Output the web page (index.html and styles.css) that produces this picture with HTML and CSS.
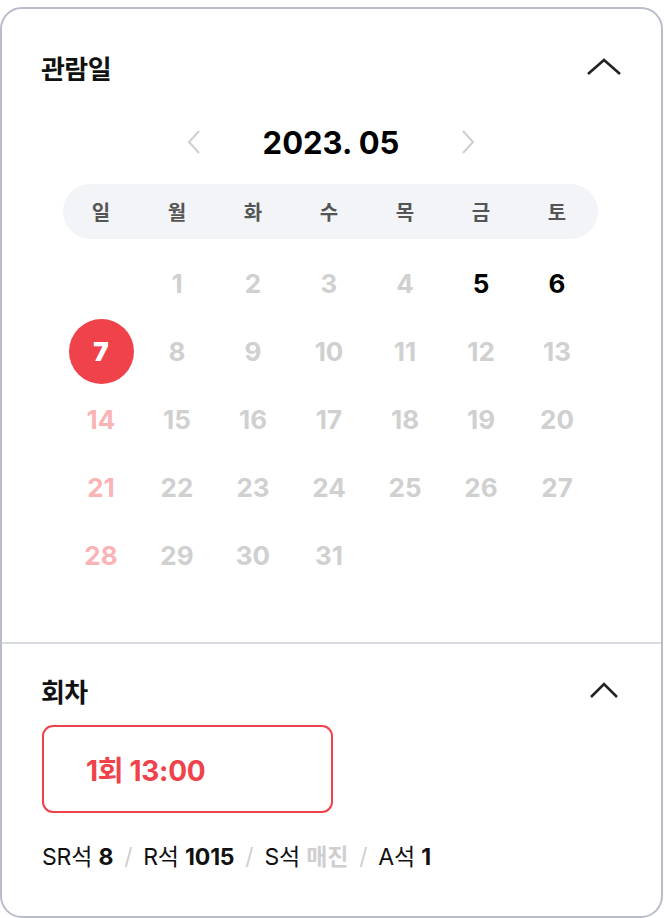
FILE: index.html
```html
<!DOCTYPE html>
<html lang="ko">
<head>
    <meta charset="UTF-8">
    <meta name="viewport" content="width=device-width, initial-scale=1.0">
    <title>관람일 선택</title>
    <link rel="stylesheet" href="styles.css">
</head>
<body>
    <div class="booking-card">
        <section class="panel panel-date">
            <div class="panel-head">
                <h2>관람일</h2>
                <svg class="toggle" width="36" height="20" viewBox="0 0 36 20"><polyline points="2,17 18,3 34,17" fill="none" stroke="#222" stroke-width="2.6"/></svg>
            </div>

            <div class="month-nav">
                <svg class="arrow" width="14" height="26" viewBox="0 0 14 26"><polyline points="12,2 2,13 12,24" fill="none" stroke="#cfcfcf" stroke-width="2"/></svg>
                <span class="month-label">2023. 05</span>
                <svg class="arrow" width="14" height="26" viewBox="0 0 14 26"><polyline points="2,2 12,13 2,24" fill="none" stroke="#cfcfcf" stroke-width="2"/></svg>
            </div>

            <div class="calendar">
                <div class="weekdays">
                    <span>일</span><span>월</span><span>화</span><span>수</span><span>목</span><span>금</span><span>토</span>
                </div>
                <div class="days">
                    <span></span>
                    <span class="off">1</span>
                    <span class="off">2</span>
                    <span class="off">3</span>
                    <span class="off">4</span>
                    <span class="on">5</span>
                    <span class="on">6</span>

                    <span class="selected"><b>7</b></span>
                    <span class="off">8</span>
                    <span class="off">9</span>
                    <span class="off">10</span>
                    <span class="off">11</span>
                    <span class="off">12</span>
                    <span class="off">13</span>

                    <span class="sun">14</span>
                    <span class="off">15</span>
                    <span class="off">16</span>
                    <span class="off">17</span>
                    <span class="off">18</span>
                    <span class="off">19</span>
                    <span class="off">20</span>

                    <span class="sun">21</span>
                    <span class="off">22</span>
                    <span class="off">23</span>
                    <span class="off">24</span>
                    <span class="off">25</span>
                    <span class="off">26</span>
                    <span class="off">27</span>

                    <span class="sun">28</span>
                    <span class="off">29</span>
                    <span class="off">30</span>
                    <span class="off">31</span>
                </div>
            </div>
        </section>

        <section class="panel panel-time">
            <div class="panel-head">
                <h2>회차</h2>
                <svg class="toggle" width="36" height="20" viewBox="0 0 36 20"><polyline points="5,17 18,4 31,17" fill="none" stroke="#222" stroke-width="2.6"/></svg>
            </div>

            <button class="round-btn">1회 13:00</button>

            <p class="seats">
                SR석 <b>8</b><span class="sep">/</span>R석 <b>1015</b><span class="sep">/</span>S석 <span class="sold">매진</span><span class="sep">/</span>A석 <b>1</b>
            </p>
        </section>
    </div>
</body>
</html>
```

FILE: styles.css
```css
body {
    margin: 0;
    padding: 0;
    background-color: #fff;
    font-family: Inter, "Noto Sans CJK KR", sans-serif;
    color: #111;
}

.booking-card {
    width: 663px;
    margin-top: 7px;
    box-sizing: border-box;
    border: 2px solid #b9bdca;
    border-radius: 22px;
    overflow: hidden;
}

.panel {
    padding: 0 40px 0 39px;
}

.panel-date {
    padding-top: 38px;
    padding-bottom: 53px;
    border-bottom: 2px solid #d8dce2;
}

.panel-time {
    padding-top: 26px;
    padding-bottom: 45px;
}

.panel-head {
    display: flex;
    justify-content: space-between;
    align-items: center;
    height: 40px;
}

.panel-head h2 {
    margin: 0;
    font-size: 26px;
    font-weight: 700;
    letter-spacing: -0.6px;
}

.panel-head .toggle {
    margin-right: -1px;
}

.month-nav {
    display: flex;
    justify-content: center;
    align-items: center;
    gap: 62px;
    height: 40px;
    margin-top: 35px;
}

.month-label {
    font-size: 31px;
    font-weight: 700;
    color: #000;
}

.calendar {
    margin: 22px 23px 0 22px;
}

.weekdays {
    display: grid;
    grid-template-columns: repeat(7, 76px);
    height: 55px;
    align-items: center;
    background-color: #f3f4f7;
    border-radius: 28px;
}

.weekdays span {
    text-align: center;
    font-size: 20px;
    font-weight: 700;
    color: #555;
}

.days {
    display: grid;
    grid-template-columns: repeat(7, 76px);
    grid-auto-rows: 68px;
    margin-top: 10px;
}

.days span {
    display: flex;
    justify-content: center;
    align-items: center;
    font-size: 26px;
    font-weight: 700;
}

.days .off {
    color: #d0d0d0;
}

.days .on {
    color: #000;
}

.days .sun {
    color: #fbb4b6;
}

.days .selected b {
    display: flex;
    justify-content: center;
    align-items: center;
    width: 65px;
    height: 65px;
    border-radius: 50%;
    background-color: #f0424a;
    color: #fff;
}

.round-btn {
    display: block;
    width: 291px;
    height: 88px;
    margin-top: 15px;
    margin-left: 1px;
    padding: 0 0 0 42px;
    text-align: left;
    background: #fff;
    border: 2px solid #f0424a;
    border-radius: 11px;
    font-family: inherit;
    font-size: 28px;
    font-weight: 700;
    letter-spacing: -0.3px;
    color: #f0424a;
}

.seats {
    margin: 30px 0 0 1px;
    height: 28px;
    line-height: 28px;
    font-size: 23px;
    letter-spacing: -0.2px;
    color: #111;
}

.seats b {
    font-weight: 700;
}

.seats .sep {
    margin: 0 11px;
    color: #cfcfcf;
}

.seats .sold {
    color: #cfcfcf;
    font-weight: 700;
}
```
